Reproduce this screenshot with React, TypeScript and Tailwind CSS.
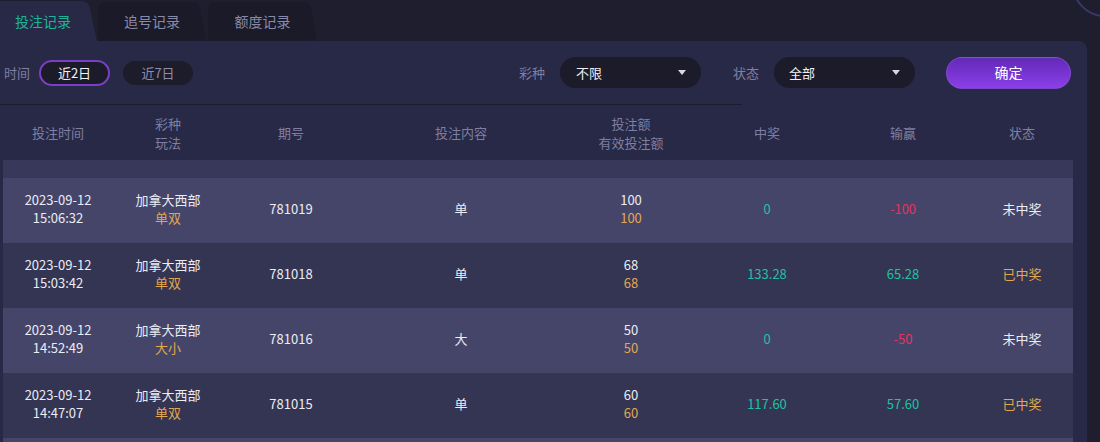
import React from "react";

const FONT = { fontFamily: '"Noto Sans CJK SC", "Noto Sans", sans-serif' };

type Row = {
  date: string;
  time: string;
  game: string;
  play: string;
  issue: string;
  content: string;
  amount: string;
  valid: string;
  win: string;
  winColor: string;
  pl: string;
  plColor: string;
  status: string;
  statusColor: string;
};

const GREEN = "text-[#1cc3a2]";
const RED = "text-[#e0355d]";
const GOLD = "text-[#e2a84f]";
const WHITE = "text-[#ececf2]";

const rows: Row[] = [
  { date: "2023-09-12", time: "15:06:32", game: "加拿大西部", play: "单双", issue: "781019", content: "单", amount: "100", valid: "100", win: "0", winColor: GREEN, pl: "-100", plColor: RED, status: "未中奖", statusColor: WHITE },
  { date: "2023-09-12", time: "15:03:42", game: "加拿大西部", play: "单双", issue: "781018", content: "单", amount: "68", valid: "68", win: "133.28", winColor: GREEN, pl: "65.28", plColor: GREEN, status: "已中奖", statusColor: GOLD },
  { date: "2023-09-12", time: "14:52:49", game: "加拿大西部", play: "大小", issue: "781016", content: "大", amount: "50", valid: "50", win: "0", winColor: GREEN, pl: "-50", plColor: RED, status: "未中奖", statusColor: WHITE },
  { date: "2023-09-12", time: "14:47:07", game: "加拿大西部", play: "单双", issue: "781015", content: "单", amount: "60", valid: "60", win: "117.60", winColor: GREEN, pl: "57.60", plColor: GREEN, status: "已中奖", statusColor: GOLD },
];

const GRID = "grid grid-cols-[110px_110px_136px_204px_136px_136px_136px_102px]";

function Caret() {
  return (
    <svg width="8" height="5" viewBox="0 0 8 5" className="shrink-0">
      <path d="M0 0 H8 L4 5 Z" fill="#d9d9e3" />
    </svg>
  );
}

function Tab({ label, active, w, path }: { label: string; active?: boolean; w: number; path: string }) {
  return (
    <div className="relative h-[41px] flex items-center" style={{ width: w }}>
      <svg className="absolute inset-0" width={w} height={41} viewBox={`0 0 ${w} 41`}>
        <path d={path} fill={active ? "#272946" : "#1a1a28"} />
      </svg>
      <span
        className={`relative text-[14px] leading-none ${active ? "text-[#1db59a] pl-[15px]" : "text-[#8a8aa8] w-full text-center"}`}
      >
        {label}
      </span>
    </div>
  );
}

export default function App() {
  return (
    <div className="relative w-[1100px] h-[442px] overflow-hidden bg-[#1e1e2e]" style={FONT}>
      {/* avatar ring top-right */}
      <div className="absolute left-[1072px] top-[-49px] w-[66px] h-[66px] rounded-full border-2 border-[#38386a]" />

      {/* tabs */}
      <div className="flex h-[41px] items-end">
        <Tab label="投注记录" active w={97} path="M0 41 V1 H81 Q89 1 90 9 L97 41 Z" />
        <div className="w-px" />
        <Tab label="追号记录" w={108} path="M0 41 V10 Q0 2 8 2 H95 Q101 2 102 8 L108 41 Z" />
        <div className="w-[2px]" />
        <Tab label="额度记录" w={109} path="M0 41 V10 Q0 2 8 2 H96 Q102 2 103 8 L109 41 Z" />
      </div>

      {/* panel */}
      <div className="w-[1087px] h-[401px] bg-[#272946] rounded-tr-[8px]">
        {/* filter row */}
        <div className="h-[63px] flex items-center pl-[4px] pr-[16px] text-[13px]">
          <span className="text-[#7e7fa2]">时间</span>
          <div className="ml-[9px] w-[71px] h-[26px] rounded-full border-2 border-[#7a3fc6] bg-[#1b1b2a] flex items-center justify-center text-[#f2f2f6]">
            近2日
          </div>
          <div className="ml-[13px] w-[70px] h-[24px] rounded-full bg-[#1c1c2b] flex items-center justify-center text-[#8d8dab]">
            近7日
          </div>

          <span className="ml-auto text-[#7e7fa2]">彩种</span>
          <div className="ml-[15px] w-[141px] h-[31px] rounded-full bg-[#1b1b2a] flex items-center pl-[16px] pr-[15px] justify-between text-[#f0f0f4]">
            <span>不限</span>
            <Caret />
          </div>

          <span className="ml-[32px] text-[#7e7fa2]">状态</span>
          <div className="ml-[15px] w-[141px] h-[31px] rounded-full bg-[#1b1b2a] flex items-center pl-[15px] pr-[15px] justify-between text-[#f0f0f4]">
            <span>全部</span>
            <Caret />
          </div>

          <div className="ml-[31px] w-[125px] h-[32px] rounded-full bg-linear-to-b from-[#6329b8] to-[#8b3fe8] border border-[#8a55d6]/60 flex items-center justify-center text-[14px] text-white">
            确定
          </div>
        </div>

        <div className="w-[742px] h-px bg-[#1c1c2e]" />

        {/* header */}
        <div className={`${GRID} ml-[3px] h-[55px] items-center text-[13px] leading-[19px] text-[#7e7fa2] text-center`}>
          <div>投注时间</div>
          <div>彩种<br />玩法</div>
          <div>期号</div>
          <div>投注内容</div>
          <div>投注额<br />有效投注额</div>
          <div>中奖</div>
          <div>输赢</div>
          <div>状态</div>
        </div>

        {/* body */}
        <div className="ml-[3px] w-[1070px]">
          <div className="h-[18px] bg-[#38385a]" />
          {rows.map((r, i) => (
            <div
              key={i}
              className={`${GRID} h-[65px] items-center text-center text-[13px] leading-[17.5px] pb-[4px] ${i % 2 === 0 ? "bg-[#45456a]" : "bg-[#343453]"}`}
            >
              <div className={WHITE}>{r.date}<br />{r.time}</div>
              <div>
                <div className={WHITE}>{r.game}</div>
                <div className={GOLD}>{r.play}</div>
              </div>
              <div className={WHITE}>{r.issue}</div>
              <div className={WHITE}>{r.content}</div>
              <div>
                <div className={WHITE}>{r.amount}</div>
                <div className={GOLD}>{r.valid}</div>
              </div>
              <div className={r.winColor}>{r.win}</div>
              <div className={r.plColor}>{r.pl}</div>
              <div className={r.statusColor}>{r.status}</div>
            </div>
          ))}
          <div className="h-[20px] bg-[#45456a]" />
        </div>
      </div>
    </div>
  );
}
